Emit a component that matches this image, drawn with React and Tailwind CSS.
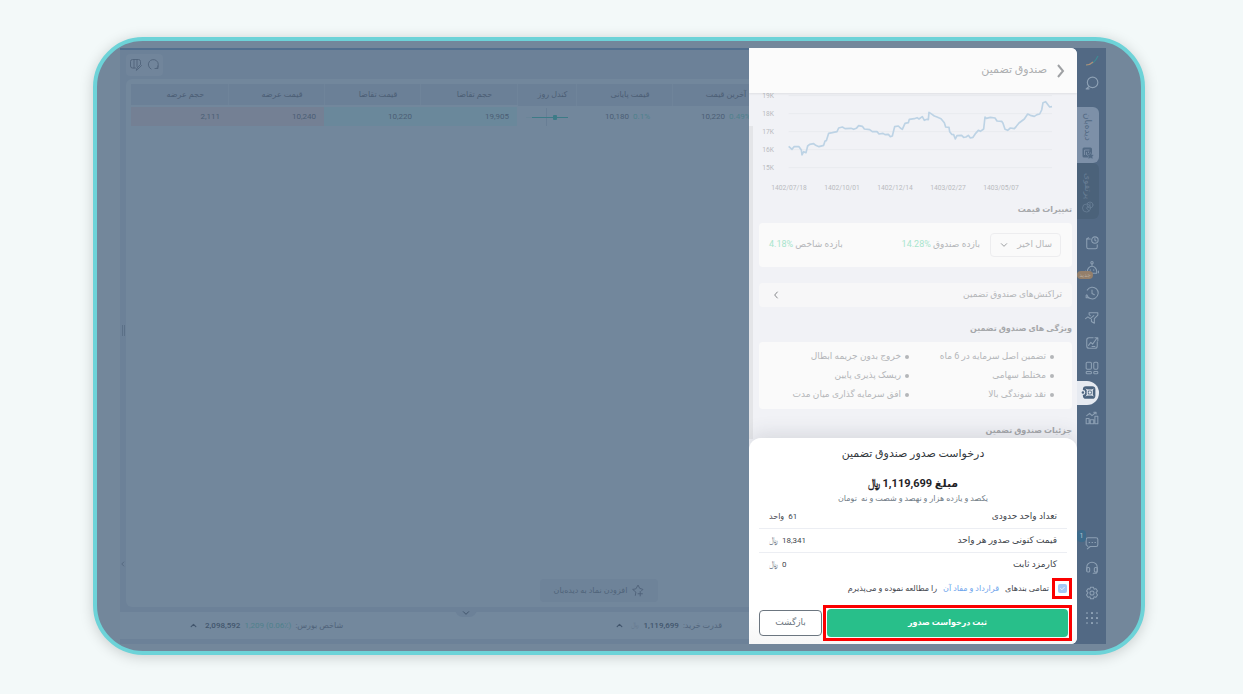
import React, { useState } from 'react';

const font = "font-[Roboto,'DejaVu_Sans',sans-serif]";

const Icon = ({ children, className = 'size-[14px]', width = 1.8 }) => (
  <svg viewBox="0 0 24 24" fill="none" stroke="currentColor" strokeWidth={width} strokeLinecap="round" strokeLinejoin="round" className={className} aria-hidden="true">
    {children}
  </svg>
);

const ChevronDown = ({ className }) => <Icon className={className} width={3}><path d="M4 8l8 8 8-8" /></Icon>;
const ChevronUp = ({ className }) => <Icon className={className} width={4}><path d="M4 16l8-8 8 8" /></Icon>;

const menuItems = [
  {
    label: 'یادداشت',
    icon: <><path d="M9 5H3v14a3 3 0 0 0 3 3h12a3 3 0 0 0 3-3v-4" /><path d="M3 5l3-2" /><circle cx="17" cy="7" r="5.5" /><path d="M17 4.500v3l2 1" /></>,
  },
  {
    label: 'ربات',
    badge: 'جدید',
    icon: <><circle cx="12" cy="3" r="2" /><path d="M12 5v3M4 18a8 9 0 0 1 16 0v3H4zM1 17v3M23 17v3" /><path d="M9 15v1M15 15v1" /></>,
  },
  {
    label: 'تاریخچه',
    icon: <><path d="M3 15a10 10 0 1 0 1-8" /><path d="M6 20H2v-4M12 7v6l4 2" /></>,
  },
  {
    label: 'فیلتر',
    icon: <><path d="M7 3h15v4l-6 6v8l-5-3v-4M7 3v3l2 2" /><path d="M1 13l4-3 4 3 6-5" /></>,
  },
  {
    label: 'نمودار',
    icon: <><path d="M14 3H7a4 4 0 0 0-4 4v10a4 4 0 0 0 4 4h10a4 4 0 0 0 4-4v-7" /><path d="M6 16l4-5 3 3 8-11M17 3h5v5M12 18h5" /></>,
  },
  {
    label: 'داشبورد',
    icon: <><rect x="2" y="2" width="9" height="12" rx="2" /><rect x="15" y="2" width="7" height="12" rx="2" /><rect x="2" y="18" width="9" height="4" rx="1.500" /><rect x="15" y="18" width="7" height="4" rx="1.500" /></>,
  },
  { label: 'صندوق', active: true },
  {
    label: 'گزارش',
    icon: <><path d="M2 13h5v9H2zM9 15h6v7H9zM17 9h5v13h-5z" /><path d="M3 8l5-4 4 4 6-5M15 2h4v3" /></>,
  },
];

const bottomItems = [
  {
    label: 'گفتگو',
    badge: '1',
    icon: <><path d="M5 3h14a3 3 0 0 1 3 3v9a3 3 0 0 1-3 3H9l-5 4M2 15V6a3 3 0 0 1 3-3M2 15l3 3" /><path d="M7 11h1M12 11h1M17 11h1" /></>,
  },
  {
    label: 'پشتیبانی',
    icon: <><path d="M3 16v-5a9 9 0 0 1 18 0v6a4 4 0 0 1-4 4h-3" /><rect x="3" y="11" width="5" height="8" rx="2" /><rect x="16" y="11" width="5" height="8" rx="2" /></>,
  },
  {
    label: 'تنظیمات',
    icon: <><circle cx="12" cy="12" r="3.500" /><path d="M9.500 2h5l1 3.500 3-1 3 4-2.500 3 2.500 4-3 4-3-1-1 3.500h-5l-1-3.500-3 1-3-4 2.500-4-2.500-3 3-4 3 1z" /></>,
  },
];

const MenuButton = ({ item }) => {
  if (item.active) {
    return (
      <li className="flex h-[25px] items-center">
        <button type="button" aria-label={item.label} className="flex h-6 w-[22px] items-center justify-center rounded-r-full bg-[#e6eaf1] text-[#4c647f]">
          <svg viewBox="0 0 24 24" className="size-[15px]" aria-hidden="true">
            <rect x="3" y="2" width="20" height="20" rx="5" fill="currentColor" />
            <rect x="10" y="8" width="8" height="8" fill="none" stroke="#e6eaf1" strokeWidth="1.800" />
            <path d="M8 6l3 3M20 6l-3 3M8 18l3-3M20 18l-3-3" stroke="#e6eaf1" strokeWidth="1.500" />
            <circle cx="14" cy="12" r="2" fill="#e6eaf1" />
            <circle cx="3" cy="12" r="3" fill="currentColor" stroke="#e6eaf1" strokeWidth="1.800" />
          </svg>
        </button>
      </li>
    );
  }
  return (
    <li className="relative flex h-[25px] items-center justify-center">
      <button type="button" aria-label={item.label} className="ml-px">
        <Icon>{item.icon}</Icon>
      </button>
      {item.badge === '1' && (
        <span className="absolute left-0 top-0 flex h-3 w-[9px] items-center justify-center rounded bg-[#3d6b8b] text-[7px] text-[#b4c3d2]">1</span>
      )}
      {item.badge && item.badge !== '1' && (
        <span className="absolute left-0 top-4 h-2 w-4 rounded-full bg-[#947f6b] text-center text-[6px] leading-2 text-[#b5aa9c]">{item.badge}</span>
      )}
    </li>
  );
};

const Sidebar = () => (
  <nav dir="ltr" className="flex w-[29px] shrink-0 flex-col bg-[#526984] text-[#8da0b4]">
    <div className="flex h-[26px] items-center justify-center">
      <svg viewBox="0 0 14 12" className="h-3 w-[14px]" aria-hidden="true">
        <path d="M1 10Q9 10 13 1" fill="none" stroke="#3f8a94" strokeWidth="1.200" />
        <path d="M1 10Q5 10 8 7" fill="none" stroke="#b08c78" strokeWidth="1.200" />
      </svg>
    </div>
    <div className="flex h-[18px] items-center justify-center">
      <button type="button" aria-label="جستجو">
        <Icon width={2}><circle cx="13" cy="11" r="9" /><path d="M7 18l-5 4h5" /></Icon>
      </button>
    </div>
    <button type="button" className="mt-[15px] flex h-14 w-[22px] flex-col items-center justify-between rounded-r-md bg-[#7d90a8] pb-1 pt-1.5 text-[#536a84]">
      <span dir="rtl" className="text-[9px] leading-3 [writing-mode:vertical-rl]">دیده‌بان</span>
      <svg viewBox="0 0 24 24" className="size-3" aria-hidden="true">
        <rect x="1" y="1" width="19" height="20" rx="3" fill="currentColor" />
        <path d="M5 6h10M5 6v10M9 10v6M13 9v3" stroke="#7d90a8" strokeWidth="1.800" />
        <path d="M17 11l2 4 5 1-3 3 1 5-5-2-5 2 1-5-3-3 5-1z" fill="currentColor" stroke="#7d90a8" />
      </svg>
    </button>
    <button type="button" className="flex h-14 w-[22px] flex-col items-center justify-between rounded-r-md bg-[#4b627a] pb-1.5 pt-2.5 text-[#677d94]">
      <span dir="rtl" className="text-[9px] leading-3 [writing-mode:vertical-rl]">پرتفوی</span>
      <Icon className="size-3"><circle cx="9" cy="14" r="8" /><path d="M9 14l6-5M9 14l5 6" /><circle cx="16" cy="8" r="6" /><path d="M16 5v6" /></Icon>
    </button>
    <ul className="mt-[11px]">
      {menuItems.map((item) => <MenuButton key={item.label} item={item} />)}
    </ul>
    <ul className="mt-auto pb-[14px]">
      {bottomItems.map((item) => <MenuButton key={item.label} item={item} />)}
      <li className="flex h-[25px] items-center justify-center">
        <button type="button" aria-label="همه ابزارها" className="ml-px">
          <svg viewBox="0 0 12 12" className="size-3" fill="currentColor" aria-hidden="true">
            {[0, 5, 10].map((y) => [0, 5, 10].map((x) => (
              <rect key={`${x}-${y}`} x={x} y={y} width="2" height="2" rx=".5" opacity={x === 5 || y === 5 ? 1 : 0.6} />
            )))}
          </svg>
        </button>
      </li>
    </ul>
  </nav>
);

const headers = [
  { title: 'حجم عرضه', width: 'w-[97px]' },
  { title: 'قیمت عرضه', width: 'w-[96px]' },
  { title: 'قیمت تقاضا', width: 'w-[96px]' },
  { title: 'حجم تقاضا', width: 'w-[97px]' },
  { title: 'کندل روز', width: 'w-[59px]' },
  { title: 'قیمت پایانی', width: 'w-[96px]' },
  { title: 'آخرین قیمت', width: 'w-[96px]' },
];

const WatchTable = () => (
  <table dir="ltr" className="w-[calc(100%+19px)] table-fixed border-collapse text-[8px] text-[#4b5e75]">
    <thead>
      <tr className="h-[22px] bg-[#6b8097]">
        {headers.map((header) => (
          <th key={header.title} className={`${header.width} whitespace-nowrap border-r border-[#6f849a] pl-3 text-[8px] font-medium`} dir="rtl">{header.title}</th>
        ))}
      </tr>
    </thead>
    <tbody>
      <tr className="h-5">
        <td className="border-t-2 border-[#72879c] bg-[#748094] pr-2 text-right">2,111</td>
        <td className="border-t-2 border-[#72879c] bg-[#748094] pr-2 text-right">10,240</td>
        <td className="border-t-2 border-[#72879c] bg-[#6a889b] pr-2 text-right">10,220</td>
        <td className="border-t-2 border-[#72879c] bg-[#6a889b] pr-2 text-right">19,905</td>
        <td>
          <svg viewBox="0 0 44 18" className="mx-auto mt-0.5 h-[18px] w-11" aria-hidden="true">
            <path d="M21.500 0v18" stroke="#687e95" />
            <path d="M1 9.500h6" stroke="#6b8598" />
            <path d="M7 9.500h36" stroke="#3d7b87" />
            <rect x="28" y="7" width="4" height="5" rx="1" fill="#3d7b87" />
          </svg>
        </td>
        <td className="whitespace-nowrap pl-[29px] pt-0.5">10,180 <span className="ml-0.5 text-[#4f818c]">0.1%</span></td>
        <td className="whitespace-nowrap pl-[29px] pt-0.5">10,220 <span className="ml-0.5 text-[#4f818c]">0.49%</span></td>
      </tr>
    </tbody>
  </table>
);

const Main = () => (
  <main className="flex min-w-0 flex-1 flex-col overflow-hidden border-t-2 border-[#526f8e] bg-[#6c8198] text-[#50637a]">
    <div dir="ltr" className="flex px-1.5 pb-[3px] pt-1">
      <div className="flex h-[22px] items-center gap-[5px] rounded bg-[#71859b] px-1">
        <button type="button" aria-label="ویرایش ستون‌ها">
          <Icon className="size-3"><path d="M11 18H5a4 4 0 0 1-4-4V5a4 4 0 0 1 4-4h12a4 4 0 0 1 4 4v5M8 1v17M14 1v14" /><path d="M13 22l1-4 7-7 2 2-7 7z" /></Icon>
        </button>
        <button type="button" aria-label="بارگذاری دوباره">
          <Icon className="size-3"><path d="M8 20a10 10 0 1 1 12-2" /><path d="M16 19h6v-5" /></Icon>
        </button>
      </div>
    </div>
    <div className="flex min-h-0 flex-1">
      <div className="flex flex-1 flex-col overflow-hidden rounded-l-md bg-[#72879c]">
        <div dir="ltr" className="pl-[5px] pt-[5px]"><WatchTable /></div>
        <div dir="ltr" className="mt-auto flex justify-end pb-[5px] pr-[91px]">
          <button type="button" dir="rtl" className="flex h-[23px] w-[118px] items-center justify-center gap-1 rounded bg-[#6e8399] text-[8px]">
            <Icon className="size-[13px]"><path d="M8 21l1-6-6-5 6-1 4-7 3 6 6 2-3 3M17 14v8M13 18h8" /></Icon>
            افزودن نماد به دیده‌بان
          </button>
        </div>
      </div>
      <div className="flex w-1.5 flex-col items-center justify-between pb-10">
        <span />
        <span className="mt-5 h-[11px] w-[3px] border-x border-[#5b7087]" />
        <Icon className="size-[6px]" width={3}><path d="M15 4l-8 8 8 8" /></Icon>
      </div>
    </div>
    <footer className="relative mb-[5px] mt-[5px] flex h-[27px] items-center justify-between bg-[#73889d] pl-[70px] pr-[27px] text-[8px]">
      <button type="button" aria-label="بستن نوار" className="absolute -top-1 right-[272px] flex h-[9px] w-[22px] items-center justify-center rounded-b-lg bg-[#6c8198] text-[#42566d]">
        <ChevronDown className="size-2" />
      </button>
      <button type="button" className="flex items-center gap-1">
        <span>قدرت خرید:</span>
        <b className="font-medium text-[#42566d]">1,119,699</b>
        <span className="text-[7px] text-[#65798f]">﷼</span>
        <ChevronUp className="mr-1 size-[7px] text-[#42566d]" />
      </button>
      <button type="button" className="flex items-center gap-1">
        <span>شاخص بورس:</span>
        <span dir="ltr" className="text-[#4f818c]">1,209 (0.06٪)</span>
        <b className="font-medium text-[#42566d]">2,098,592</b>
        <ChevronUp className="mr-1 size-[7px] text-[#42566d]" />
      </button>
    </footer>
  </main>
);

const chartLabels = [['19K', 167], ['18K', 221], ['17K', 275], ['16K', 329], ['15K', 383]];
const chartDates = [['1402/07/18', 132], ['1402/10/01', 291], ['1402/12/14', 450], ['1403/02/27', 609], ['1403/05/07', 768]];
const chartPoints =
  '131,319 141,328 147,320 162,320 169,330 171,345 176,335 183,338 188,318 194,313 206,311 212,316 222,320 236,316 240,303 244,302 251,280 262,278 276,275 281,264 292,261 300,266 318,265 326,268 334,265 341,257 352,259 358,267 374,269 382,275 396,275 402,282 414,280 420,284 430,283 436,290 442,288 449,260 460,258 466,264 472,268 480,250 490,248 493,238 508,236 516,233 522,237 532,230 538,241 546,238 550,239 552,217 558,221 568,228 576,231 588,236 598,248 602,261 612,262 614,275 620,283 626,284 631,297 636,287 650,286 656,292 663,291 670,286 676,294 684,292 692,280 700,271 706,274 716,267 720,231 724,235 736,232 750,234 756,243 770,244 774,250 780,268 788,271 796,264 808,266 814,259 822,249 838,237 848,222 856,226 868,229 876,224 884,222 890,210 894,188 902,185 910,196 914,201 921,200';

const FundChart = () => (
  <svg viewBox="12 159 984 321" direction="ltr" className="block w-full" role="img" aria-label="نمودار قیمت صندوق">
    {chartLabels.map(([label, y]) => (
      <g key={label}>
        <path d={`M131 ${y}h790`} stroke="#e9ebef" strokeWidth="3" />
        <text x="52" y={y + 7} fontSize="20" fill="#b9bbbf">{label}</text>
      </g>
    ))}
    {chartDates.map(([label, x]) => (
      <text key={label} x={x} y="451" fontSize="20" textAnchor="middle" fill="#b9bbbf">{label}</text>
    ))}
    <polyline points={chartPoints} fill="none" stroke="#bdd3e5" strokeWidth="5" strokeLinejoin="round" />
  </svg>
);

const features = [
  'تضمین اصل سرمایه در 6 ماه',
  'خروج بدون جریمه ابطال',
  'مختلط سهامی',
  'ریسک پذیری پایین',
  'نقد شوندگی بالا',
  'افق سرمایه گذاری میان مدت',
];

const SectionTitle = ({ children }) => <h3 className="text-[8px] font-bold leading-4 text-[#a5a7aa]">{children}</h3>;

const FundDetails = () => (
  <div className="min-h-0 flex-1 overflow-hidden text-[9px] text-[#b4b6b9]">
    <FundChart />
    <div className="relative pl-2.5 pr-[5px] pt-0.5">
      <span className="absolute bottom-0 left-0 -top-[74px] w-1 bg-[#e4e5e8]" />
      <SectionTitle>تغییرات قیمت</SectionTitle>
      <div className="mt-[5px] flex h-11 items-center rounded bg-[#fafafa] pl-2.5 pr-[11px]">
        <div className="relative">
          <select aria-label="بازه زمانی" className="h-6 w-[71px] appearance-none rounded border border-[#ededef] bg-transparent pr-2 text-[9px]">
            <option>سال اخیر</option>
          </select>
          <ChevronDown className="pointer-events-none absolute left-2.5 top-2 size-2 text-[#9b9da0]" />
        </div>
        <p className="mr-2.5">بازده صندوق <span className="text-[#a9e5cd]" dir="ltr">14.28%</span></p>
        <p className="mr-auto">بازده شاخص <span className="text-[#a9e5cd]" dir="ltr">4.18%</span></p>
      </div>
      <a href="#transactions" className="mt-4 flex h-6 items-center justify-between rounded bg-[#f7f7f8] pl-[13px] pr-2.5">
        تراکنش‌های صندوق تضمین
        <Icon className="size-2 text-[#85878a]" width={3}><path d="M16 3l-8 9 8 9" /></Icon>
      </a>
      <div className="mt-[14px]"><SectionTitle>ویژگی های صندوق تضمین</SectionTitle></div>
      <ul className="mt-[5px] grid grid-cols-2 rounded bg-[#fafafa] py-[5px] pl-[5px] pr-[18px]">
        {features.map((feature) => (
          <li key={feature} className="flex items-center gap-1 whitespace-nowrap leading-[19px]">
            <span className="size-1 rounded-full bg-[#b4b6b9]" />
            {feature}
          </li>
        ))}
      </ul>
      <div className="mt-[14px]"><SectionTitle>جزئیات صندوق تضمین</SectionTitle></div>
    </div>
  </div>
);

const SummaryRow = ({ label, value, unit, muted }) => (
  <div className="mx-2.5 flex h-[24px] items-center justify-between border-b border-[#eceef3] px-2.5 last:border-b-0">
    <dt className="text-[9px]">{label}</dt>
    <dd className="flex items-center gap-1">{value} <span className={muted ? 'text-[#7d8894]' : ''}>{unit}</span></dd>
  </div>
);

const IssueSheet = () => {
  const [accepted, setAccepted] = useState(true);

  return (
    <form className="relative -mt-2 rounded-t-xl bg-linear-to-b from-white from-85% to-[#f7f7f7] pb-[3px] pt-2 text-[8px] text-[#3f464d] shadow-[0_-3px_20px_rgba(60,70,90,0.16)]" onSubmit={(e) => e.preventDefault()}>
      <h2 className="text-center text-[11px] font-medium leading-4 text-[#33383d]">درخواست صدور صندوق تضمین</h2>
      <p className="mt-[14px] text-center text-[11px] font-bold leading-4 text-[#1f2327]">مبلغ 1,119,699 ﷼</p>
      <p className="text-center leading-[13px] text-[#707b86]">یکصد و یازده هزار و نهصد و شصت و نه &nbsp;تومان</p>
      <dl>
        <SummaryRow label="تعداد واحد حدودی" value="61" unit="واحد" />
        <SummaryRow label="قیمت کنونی صدور هر واحد" value="18,341" unit="﷼" muted />
        <SummaryRow label="کارمزد ثابت" value="0" unit="﷼" muted />
      </dl>
      <div className="mt-px flex items-center gap-[3px] pr-[5px]">
        <span className="flex h-[21px] w-5 items-center justify-center border-3 border-[#fb0000]">
          <span className="relative flex size-[9px]">
            <input id="terms" type="checkbox" checked={accepted} onChange={(e) => setAccepted(e.target.checked)} className="size-[9px] appearance-none rounded-xs bg-[#d5e2f3] checked:bg-[#a4c8f5]" />
            {accepted && <Icon className="pointer-events-none absolute left-0.5 top-0.5 size-[5px] text-white" width={4}><path d="M3 12l6 6L21 6" /></Icon>}
          </span>
        </span>
        <label htmlFor="terms">
          تمامی بندهای <a href="#terms" className="mx-1 text-[#6ba3ec]">قرارداد و مفاد آن</a> را مطالعه نموده و می‌پذیرم
        </label>
      </div>
      <div className="mt-1.5 flex items-center pl-2.5 pr-[5px]">
        <div className="flex flex-1 border-3 border-[#fb0000] p-px">
          <button type="submit" className="h-7 flex-1 rounded bg-[#28bf8a] text-[8px] font-bold text-white">ثبت درخواست صدور</button>
        </div>
        <button type="button" className="mr-px h-[26px] w-[63px] rounded border border-[#6c7680] bg-white text-[9px] text-[#6c7680]">بازگشت</button>
      </div>
    </form>
  );
};

const FundPanel = () => (
  <div className="flex w-[328px] shrink-0 flex-col bg-[#526984]">
    <section className="flex min-h-0 flex-1 flex-col overflow-hidden rounded-r-md bg-[#f1f2f6]">
      <header className="relative flex h-[45px] items-center gap-2 bg-[#fbfbfb] pr-3 text-[#adafb1] shadow-[0_1px_2px_rgba(0,0,0,0.08)]">
        <button type="button" aria-label="بازگشت">
          <svg viewBox="0 0 10 14" className="h-[14px] w-2.5 text-[#9fa1a4]" fill="none" stroke="currentColor" strokeWidth="2" aria-hidden="true"><path d="M3 1l5 6-5 6" /></svg>
        </button>
        <h1 className="text-[11px]">صندوق تضمین</h1>
      </header>
      <FundDetails />
      <IssueSheet />
    </section>
  </div>
);

const App = () => (
  <div className={`flex min-h-screen bg-[#f3f9f9] pb-[39px] pl-[93px] pr-[98px] pt-[37px] ${font}`}>
    <div dir="rtl" className="flex flex-1 overflow-hidden rounded-[50px] border-4 border-[#6dd3d8] bg-[#73879b] pb-[7px] pl-[23px] pr-[35px] pt-[7px] shadow-[0_2px_14px_rgba(0,0,0,0.18)]">
      <Sidebar />
      <FundPanel />
      <Main />
    </div>
  </div>
);

export default App;
